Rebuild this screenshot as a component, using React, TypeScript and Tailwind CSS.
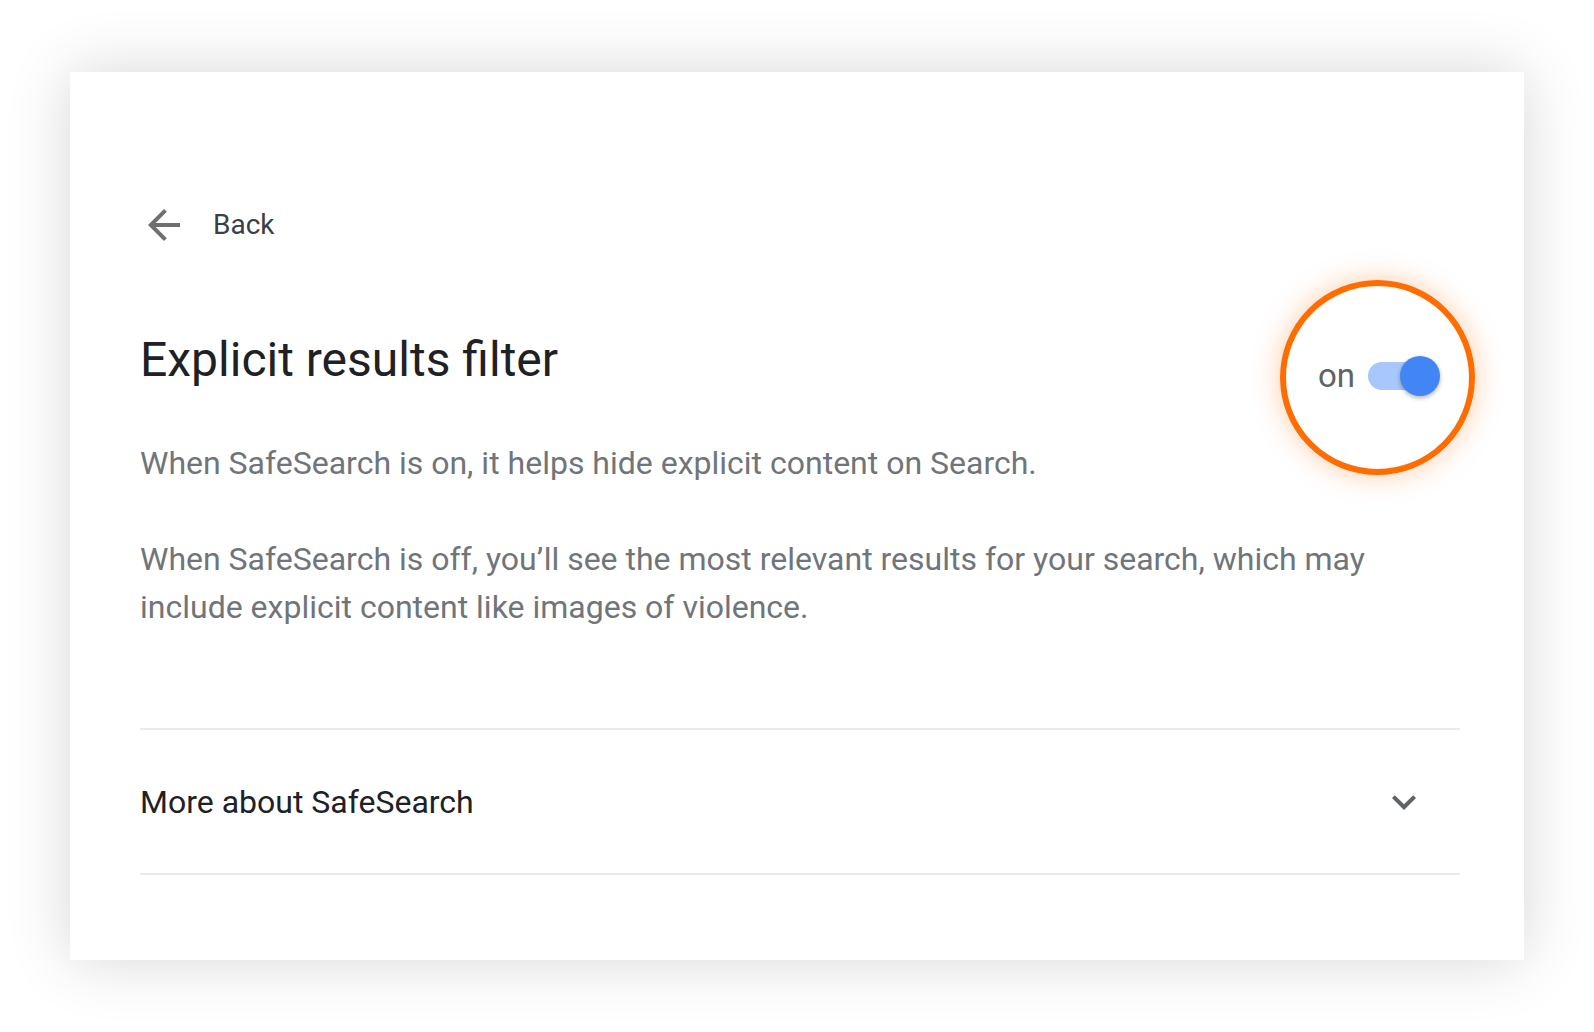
import { useState } from 'react';

function BackArrow() {
  return (
    <svg width="48" height="48" viewBox="0 0 24 24" fill="#6f6f6f">
      <path d="M20 11H7.83l5.59-5.59L12 4l-8 8 8 8 1.41-1.41L7.83 13H20v-2z" />
    </svg>
  );
}

function ExpandMore() {
  return (
    <svg width="48" height="48" viewBox="0 0 24 24" fill="#5f6368">
      <path d="M16.59 8.59L12 13.17 7.41 8.59 6 10l6 6 6-6z" />
    </svg>
  );
}

export default function App() {
  const [enabled, setEnabled] = useState(true);

  return (
    <div className="w-[1594px] h-[1032px] bg-white overflow-hidden font-['Roboto',_'Liberation_Sans',_sans-serif]">
      <div className="ml-[70px] mt-[72px] w-[1454px] h-[888px] bg-white shadow-[0_0_60px_rgba(0,0,0,0.16)] pl-[70px] pr-[64px] pt-[129px]">
        {/* Back link */}
        <div className="flex items-center h-[48px]">
          <BackArrow />
          <span className="ml-[25px] text-[28px] leading-[48px] text-[#3c4043]">Back</span>
        </div>

        {/* Title + toggle */}
        <div className="flex justify-between items-start h-[56px] mt-[83px]">
          <h1 className="text-[48px] leading-[56px] text-[#202124]">Explicit results filter</h1>
          <div className="relative flex items-center mt-[24px] mr-[20px] h-[40px]">
            <div className="absolute left-[-38px] top-[-76px] w-[195px] h-[195px] rounded-full border-[6px] border-[#ff6d00] shadow-[0_0_28px_rgba(255,109,0,0.35)] pointer-events-none" />
            <span className="text-[33px] leading-[40px] text-[#5f6368]">on</span>
            <button
              onClick={() => setEnabled(!enabled)}
              className="relative ml-[13px] w-[72px] h-[40px]"
            >
              <span className="absolute left-0 top-[6px] w-[62px] h-[28px] rounded-full bg-[#a8c7fa]" />
              <span
                className={
                  enabled
                    ? 'absolute right-0 top-0 w-[40px] h-[40px] rounded-full bg-[#4285f4] shadow-[0_2px_4px_rgba(0,0,0,0.3)]'
                    : 'absolute left-0 top-0 w-[40px] h-[40px] rounded-full bg-white shadow-[0_2px_4px_rgba(0,0,0,0.3)]'
                }
              />
            </button>
          </div>
        </div>

        {/* Description */}
        <p className="mt-[51px] text-[32px] leading-[48px] text-[#70757a]">
          When SafeSearch is on, it helps hide explicit content on Search.
        </p>
        <p className="mt-[48px] text-[32px] leading-[48px] text-[#70757a]">
          When SafeSearch is off, you’ll see the most relevant results for your search, which may include explicit content like images of violence.
        </p>

        {/* Accordion */}
        <div className="mt-[97px] border-t-2 border-b-2 border-[#ebebeb]">
          <div className="flex items-center justify-between h-[143px]">
            <span className="text-[32px] text-[#202124]">More about SafeSearch</span>
            <span className="mr-[32px]">
              <ExpandMore />
            </span>
          </div>
        </div>
      </div>
    </div>
  );
}
